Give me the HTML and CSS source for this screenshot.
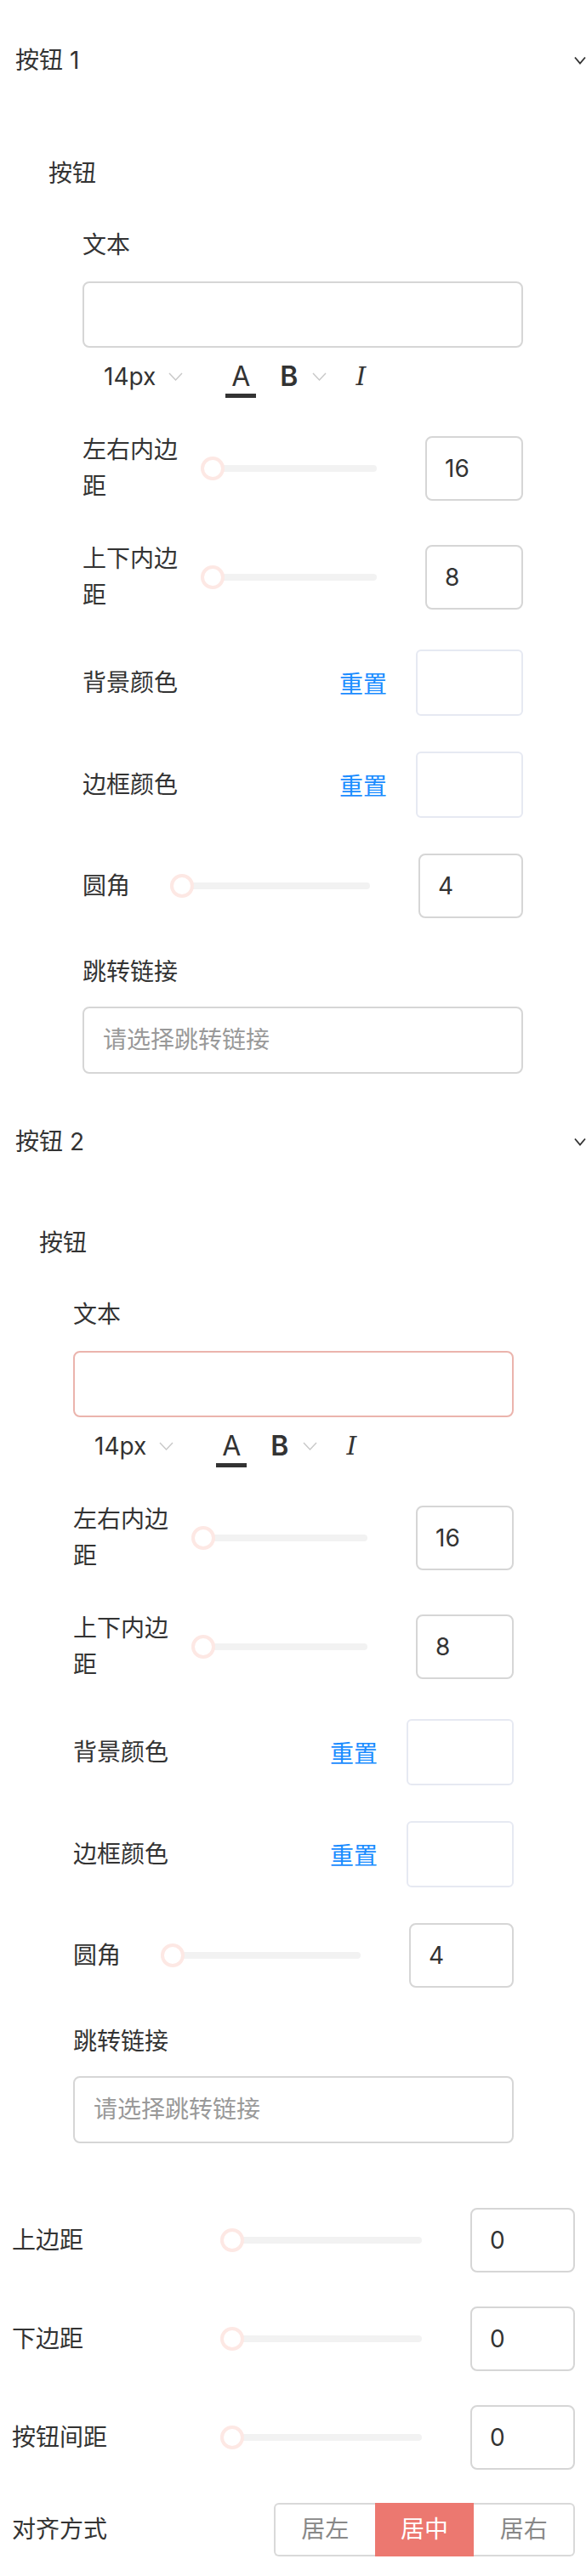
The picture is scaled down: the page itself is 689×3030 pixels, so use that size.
FILE: index.html
```
<!DOCTYPE html>
<html lang="zh">
	<head>
		<meta charset="utf-8">
		<title>按钮设置</title>
		<meta name="viewport" content="width=device-width, initial-scale=1" />
		<link rel="stylesheet" href="styles.css">
	</head>
	<body>
		<section class="panel panel-first">
			<div class="panel-head">
				<span>按钮 1</span>
				<svg class="head-arrow" width="14" height="10" viewBox="0 0 14 10"><polyline points="1,1.5 7,8.5 13,1.5" fill="none" stroke="#333" stroke-width="1.8"/></svg>
			</div>
			<div class="panel-body">
				<h3 class="sub">按钮</h3>
				<div class="fields">
					<div class="field-label">文本</div>
					<div class="text-input"></div>
					<div class="toolbar">
						<span class="size">14px</span>
						<svg class="caret" width="17" height="10" viewBox="0 0 17 10"><polyline points="1,1 8.5,9 16,1" fill="none" stroke="#c8c8c8" stroke-width="1.4"/></svg>
						<span class="tool tool-color">A</span>
						<span class="tool tool-bold">B</span>
						<svg class="caret caret-bold" width="17" height="10" viewBox="0 0 17 10"><polyline points="1,1 8.5,9 16,1" fill="none" stroke="#c8c8c8" stroke-width="1.4"/></svg>
						<span class="tool tool-italic">I</span>
					</div>
					<div class="row row-first">
						<span class="row-label">左右内边距</span>
						<div class="slider"><span class="track"></span><span class="thumb"></span></div>
						<div class="num">16</div>
					</div>
					<div class="row">
						<span class="row-label">上下内边距</span>
						<div class="slider"><span class="track"></span><span class="thumb"></span></div>
						<div class="num">8</div>
					</div>
					<div class="row">
						<span class="row-label">背景颜色</span>
						<span class="reset">重置</span>
						<div class="swatch"></div>
					</div>
					<div class="row">
						<span class="row-label">边框颜色</span>
						<span class="reset">重置</span>
						<div class="swatch"></div>
					</div>
					<div class="row row-radius">
						<span class="row-label">圆角</span>
						<div class="slider"><span class="track"></span><span class="thumb"></span></div>
						<div class="num num-wide">4</div>
					</div>
					<div class="field-label link-label">跳转链接</div>
					<div class="link-input">请选择跳转链接</div>
				</div>
			</div>
		</section>

		<section class="panel panel-alt">
			<div class="panel-head">
				<span>按钮 2</span>
				<svg class="head-arrow" width="14" height="10" viewBox="0 0 14 10"><polyline points="1,1.5 7,8.5 13,1.5" fill="none" stroke="#333" stroke-width="1.8"/></svg>
			</div>
			<div class="panel-body">
				<h3 class="sub">按钮</h3>
				<div class="fields">
					<div class="field-label">文本</div>
					<div class="text-input"></div>
					<div class="toolbar">
						<span class="size">14px</span>
						<svg class="caret" width="17" height="10" viewBox="0 0 17 10"><polyline points="1,1 8.5,9 16,1" fill="none" stroke="#c8c8c8" stroke-width="1.4"/></svg>
						<span class="tool tool-color">A</span>
						<span class="tool tool-bold">B</span>
						<svg class="caret caret-bold" width="17" height="10" viewBox="0 0 17 10"><polyline points="1,1 8.5,9 16,1" fill="none" stroke="#c8c8c8" stroke-width="1.4"/></svg>
						<span class="tool tool-italic">I</span>
					</div>
					<div class="row row-first">
						<span class="row-label">左右内边距</span>
						<div class="slider"><span class="track"></span><span class="thumb"></span></div>
						<div class="num">16</div>
					</div>
					<div class="row">
						<span class="row-label">上下内边距</span>
						<div class="slider"><span class="track"></span><span class="thumb"></span></div>
						<div class="num">8</div>
					</div>
					<div class="row">
						<span class="row-label">背景颜色</span>
						<span class="reset">重置</span>
						<div class="swatch"></div>
					</div>
					<div class="row">
						<span class="row-label">边框颜色</span>
						<span class="reset">重置</span>
						<div class="swatch"></div>
					</div>
					<div class="row row-radius">
						<span class="row-label">圆角</span>
						<div class="slider"><span class="track"></span><span class="thumb"></span></div>
						<div class="num num-wide">4</div>
					</div>
					<div class="field-label link-label">跳转链接</div>
					<div class="link-input">请选择跳转链接</div>
				</div>
			</div>
		</section>

		<section class="global">
			<div class="row">
				<span class="row-label">上边距</span>
				<div class="slider"><span class="track"></span><span class="thumb"></span></div>
				<div class="num num-wide">0</div>
			</div>
			<div class="row">
				<span class="row-label">下边距</span>
				<div class="slider"><span class="track"></span><span class="thumb"></span></div>
				<div class="num num-wide">0</div>
			</div>
			<div class="row">
				<span class="row-label">按钮间距</span>
				<div class="slider"><span class="track"></span><span class="thumb"></span></div>
				<div class="num num-wide">0</div>
			</div>
			<div class="row row-align">
				<span class="row-label">对齐方式</span>
				<div class="seg">
					<span class="seg-item">居左</span>
					<span class="seg-item active">居中</span>
					<span class="seg-item">居右</span>
				</div>
			</div>
		</section>
	</body>
</html>
```

FILE: styles.css
```
* { box-sizing: border-box; }
html, body { overflow-x: hidden; }
body {
	margin: 0;
	width: 689px;
	font-family: Inter, "Noto Sans CJK SC", sans-serif;
	font-size: 28px;
	color: #333;
	background: #fff;
}

/* collapsible panel */
.panel-head {
	display: flex;
	align-items: center;
	justify-content: space-between;
	height: 84px;
	padding-left: 18px;
	line-height: 42px;
}
.panel-first .panel-head { margin-top: 29px; }
.panel-body { padding: 56px 0 38px 57px; }
.panel-first .panel-body { padding-top: 70px; }
.panel-alt .panel-body { padding-left: 46px; }
.sub { margin: 0; font-size: 28px; font-weight: normal; line-height: 42px; }
.fields { margin: 42px 0 0 40px; width: 518px; }
.field-label { line-height: 42px; }
.link-label { margin-top: 42px; }

.text-input {
	margin-top: 22px;
	height: 78px;
	border: 2px solid #d6d6d6;
	border-radius: 8px;
}
.panel-alt .text-input { border-color: #ebb4ad; }

/* text style toolbar */
.toolbar {
	display: flex;
	align-items: flex-start;
	margin-top: 14px;
	padding-left: 25px;
	height: 45px;
	line-height: 40px;
}
.caret { flex: none; margin: 15px 0 0 15px; }
.tool { font-size: 32px; }
.tool-color {
	margin-left: 50px;
	padding: 0 7px;
	height: 45px;
	border-bottom: 5px solid #333;
}
.tool-bold { margin-left: 28px; font-weight: 600; }
.caret-bold { margin-left: 17px; }
.tool-italic { margin-left: 34px; font-family: "DejaVu Serif", serif; font-style: italic; font-size: 30px; }

/* form rows */
.row {
	display: flex;
	align-items: center;
	margin-top: 42px;
}
.row-first { margin-top: 40px; }
.row-label { flex: none; max-width: 115px; line-height: 43px; }
.slider {
	flex: 1;
	position: relative;
	display: flex;
	align-items: center;
	height: 28px;
	margin: 0 57px 0 24px;
}
.track { flex: 1; height: 8px; border-radius: 4px; background: #f2f2f2; }
.thumb {
	position: absolute;
	left: 0;
	top: 0;
	width: 28px;
	height: 28px;
	border-radius: 50%;
	border: 4px solid #fde8e4;
	background: #fff;
}
.row-radius .slider { margin-left: 47px; }
.num {
	flex: none;
	width: 115px;
	height: 76px;
	padding-left: 21px;
	line-height: 72px;
	border: 2px solid #d6d6d6;
	border-radius: 8px;
}
.num-wide { width: 123px; }
.reset { margin-left: auto; margin-right: 34px; color: #1a8cff; }
.swatch {
	flex: none;
	width: 126px;
	height: 78px;
	border: 2px solid #e6e9f2;
	border-radius: 6px;
}
.link-input {
	margin-top: 20px;
	height: 79px;
	padding-left: 22px;
	line-height: 75px;
	color: #999;
	border: 2px solid #d6d6d6;
	border-radius: 8px;
}

/* page-wide settings */
.global { padding: 38px 13px 0 14px; }
.global .row { margin-top: 40px; }
.global .row:first-child { margin-top: 0; }
.global .row-label { width: 245px; max-width: none; }
.global .slider { margin-left: 0; }
.global .row-align { margin-top: 39px; }
.seg { display: flex; width: 354px; height: 63px; margin-left: auto; }
.seg-item {
	flex: 1;
	text-align: center;
	line-height: 59px;
	color: #888;
	border-top: 2px solid #d9d9d9;
	border-bottom: 2px solid #d9d9d9;
}
.seg-item:first-child { border-left: 2px solid #d9d9d9; border-radius: 6px 0 0 6px; }
.seg-item:last-child { border-right: 2px solid #d9d9d9; border-radius: 0 6px 6px 0; }
.seg-item.active { background: #ec7870; border-color: #ec7870; color: #fff; }
```
